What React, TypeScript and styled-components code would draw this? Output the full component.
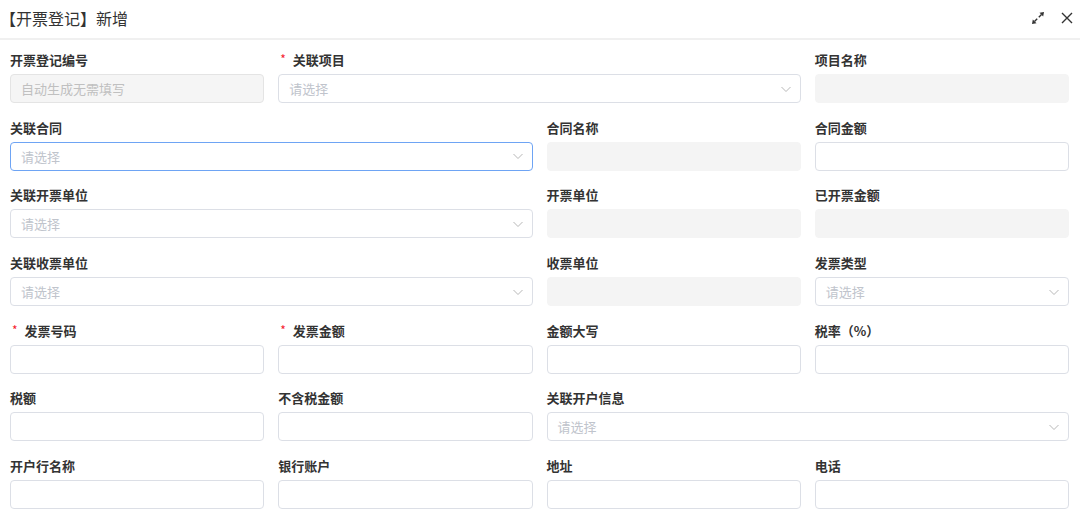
import React from 'react';
import styled, { createGlobalStyle, css } from 'styled-components';

const GlobalStyle = createGlobalStyle`
	html, body {
		margin: 0;
		padding: 0;
		background: #fff;
	}
	body {
		font-family: "Noto Sans CJK SC", "Noto Sans", "Liberation Sans", sans-serif;
		color: #333;
	}
`;

const Dialog = styled.div`
	width: 1080px;
	height: 509px;
	overflow: hidden;
	background: #fff;
`;

const Header = styled.div`
	height: 38px;
	display: flex;
	align-items: center;
	justify-content: space-between;
	border-bottom: 2px solid #f0f0f0;
	padding-right: 5px;
`;

const Title = styled.div`
	font-size: 16px;
	color: #333;
	line-height: 20px;
	margin-top: -2px;
`;

const HeaderTools = styled.div`
	display: flex;
	align-items: center;
	gap: 13px;
	margin-top: -3px;
`;

const ToolButton = styled.button`
	width: 16px;
	height: 16px;
	padding: 0;
	border: none;
	background: none;
	display: flex;
	align-items: center;
	justify-content: center;
	color: #333;
`;

const Form = styled.div`
	display: grid;
	grid-template-columns: repeat(4, 1fr);
	column-gap: 14px;
	row-gap: 14.7px;
	padding: 10px 11px 0 10px;
`;

const Field = styled.div<{ $span?: number }>`
	display: flex;
	flex-direction: column;
	gap: 4px;
	grid-column: span ${(p) => p.$span || 1};
`;

const Label = styled.div<{ $required?: boolean }>`
	height: 20px;
	line-height: 20px;
	font-size: 13px;
	font-weight: 700;
	color: #333;
	display: flex;
	align-items: center;
	${(p) =>
		p.$required &&
		css`
			padding-left: 2px;
		`}
`;

const Star = styled.span`
	color: #f5222d;
	font-size: 12px;
	font-weight: 400;
	margin-right: 7px;
	line-height: 14px;
	position: relative;
	top: -1px;
`;

type Kind = 'input' | 'disabled' | 'readonly' | 'select' | 'focused';

const Box = styled.div<{ $kind: Kind }>`
	box-sizing: border-box;
	height: 29px;
	border-radius: 4px;
	border: 1px solid #dcdfe6;
	background: #fff;
	display: flex;
	align-items: center;
	justify-content: space-between;
	padding: 0 8px 0 10px;
	font-size: 13px;
	color: #c0c4cc;
	${(p) =>
		p.$kind === 'disabled' &&
		css`
			background: #f5f5f5;
			border-color: #e4e4e4;
			color: #c0c0c0;
		`}
	${(p) =>
		p.$kind === 'readonly' &&
		css`
			background: #f4f4f4;
			border-color: #f4f4f4;
		`}
	${(p) =>
		p.$kind === 'focused' &&
		css`
			border-color: #6ea4f4;
		`}
`;

const Chevron = () => (
	<svg width="12" height="12" viewBox="0 0 12 12" fill="none">
		<path d="M1.5 4 L6 8.5 L10.5 4" stroke="#b8b8b8" strokeWidth="1" />
	</svg>
);

const ExpandIcon = () => (
	<svg width="14" height="14" viewBox="0 0 14 14" fill="#333">
		<path d="M13 1 L8.5 1.8 L12.2 5.5 Z" />
		<path d="M1 13 L5.5 12.2 L1.8 8.5 Z" />
		<path d="M10.5 3.5 L7.8 6.2 M3.5 10.5 L6.2 7.8" stroke="#333" strokeWidth="1.4" />
	</svg>
);

const CloseIcon = () => (
	<svg width="14" height="14" viewBox="0 0 14 14" fill="none">
		<path d="M2 2 L12 12 M12 2 L2 12" stroke="#333" strokeWidth="1.4" />
	</svg>
);

type FieldDef = {
	label: string;
	kind: Kind;
	span?: number;
	required?: boolean;
	placeholder?: string;
};

const fields: FieldDef[] = [
	{ label: '开票登记编号', kind: 'disabled', placeholder: '自动生成无需填写' },
	{ label: '关联项目', kind: 'select', span: 2, required: true },
	{ label: '项目名称', kind: 'readonly' },

	{ label: '关联合同', kind: 'focused', span: 2 },
	{ label: '合同名称', kind: 'readonly' },
	{ label: '合同金额', kind: 'input' },

	{ label: '关联开票单位', kind: 'select', span: 2 },
	{ label: '开票单位', kind: 'readonly' },
	{ label: '已开票金额', kind: 'readonly' },

	{ label: '关联收票单位', kind: 'select', span: 2 },
	{ label: '收票单位', kind: 'readonly' },
	{ label: '发票类型', kind: 'select' },

	{ label: '发票号码', kind: 'input', required: true },
	{ label: '发票金额', kind: 'input', required: true },
	{ label: '金额大写', kind: 'input' },
	{ label: '税率（%）', kind: 'input' },

	{ label: '税额', kind: 'input' },
	{ label: '不含税金额', kind: 'input' },
	{ label: '关联开户信息', kind: 'select', span: 2 },

	{ label: '开户行名称', kind: 'input' },
	{ label: '银行账户', kind: 'input' },
	{ label: '地址', kind: 'input' },
	{ label: '电话', kind: 'input' },
];

const FormField: React.FC<{ def: FieldDef }> = ({ def }) => {
	const isSelect = def.kind === 'select' || def.kind === 'focused';
	const placeholder = def.placeholder || (isSelect ? '请选择' : '');
	return (
		<Field $span={def.span}>
			<Label $required={def.required}>
				{def.required && <Star>*</Star>}
				{def.label}
			</Label>
			<Box $kind={def.kind}>
				<span>{placeholder}</span>
				{isSelect && <Chevron />}
			</Box>
		</Field>
	);
};

export default function App() {
	return (
		<Dialog>
			<GlobalStyle />
			<Header>
				<Title>【开票登记】新增</Title>
				<HeaderTools>
					<ToolButton>
						<ExpandIcon />
					</ToolButton>
					<ToolButton>
						<CloseIcon />
					</ToolButton>
				</HeaderTools>
			</Header>
			<Form>
				{fields.map((f) => (
					<FormField key={f.label} def={f} />
				))}
			</Form>
		</Dialog>
	);
}
